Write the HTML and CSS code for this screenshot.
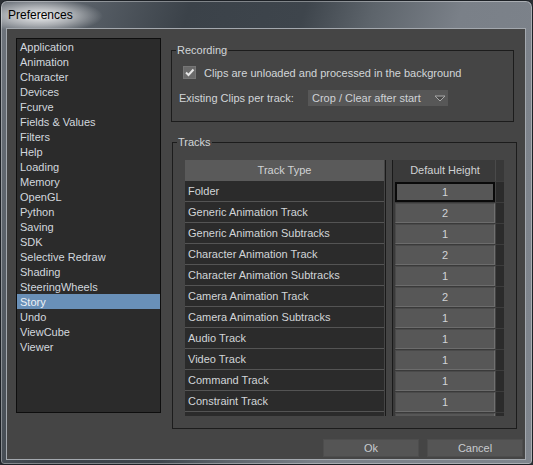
FILE: index.html
```html
<!DOCTYPE html>
<html>
<head>
<meta charset="utf-8">
<title>Preferences</title>
<link rel="stylesheet" href="styles.css">
</head>
<body>
<div class="window">
  <div class="titlebar"><span class="title">Preferences</span></div>
  <div class="client">
    <div class="main">
      <ul class="list">
        <li>Application</li>
        <li>Animation</li>
        <li>Character</li>
        <li>Devices</li>
        <li>Fcurve</li>
        <li>Fields &amp; Values</li>
        <li>Filters</li>
        <li>Help</li>
        <li>Loading</li>
        <li>Memory</li>
        <li>OpenGL</li>
        <li>Python</li>
        <li>Saving</li>
        <li>SDK</li>
        <li>Selective Redraw</li>
        <li>Shading</li>
        <li>SteeringWheels</li>
        <li class="selected">Story</li>
        <li>Undo</li>
        <li>ViewCube</li>
        <li>Viewer</li>
      </ul>
      <div class="right">
        <fieldset class="group rec">
          <legend>Recording</legend>
          <div class="check-row">
            <span class="checkbox"><svg width="13" height="13" viewBox="0 0 13 13"><path d="M3 6.5 L5.5 9 L10.5 3.5" fill="none" stroke="#e6e6e6" stroke-width="2"/></svg></span>
            <span>Clips are unloaded and processed in the background</span>
          </div>
          <div class="combo-row">
            <span class="combo-label">Existing Clips per track:</span>
            <span class="combo"><span>Crop / Clear after start</span><svg width="12" height="7" viewBox="0 0 12 7"><polygon points="1,1 11,1 6,6" fill="#474747" stroke="#a8a8a8" stroke-width="1"/></svg></span>
          </div>
        </fieldset>
        <fieldset class="group tracks">
          <legend>Tracks</legend>
          <div class="table">
            <div class="col-type">
              <div class="th">Track Type</div>
              <div class="td">Folder</div>
              <div class="td">Generic Animation Track</div>
              <div class="td">Generic Animation Subtracks</div>
              <div class="td">Character Animation Track</div>
              <div class="td">Character Animation Subtracks</div>
              <div class="td">Camera Animation Track</div>
              <div class="td">Camera Animation Subtracks</div>
              <div class="td">Audio Track</div>
              <div class="td">Video Track</div>
              <div class="td">Command Track</div>
              <div class="td">Constraint Track</div>
              <div class="td"></div>
            </div>
            <div class="splitter"></div>
            <div class="col-h">
              <div class="hrow"><div class="th2">Default Height</div><div class="narrow-h"></div></div>
              <div class="hrow"><div class="cell focus">1</div><div class="narrow"></div></div>
              <div class="hrow"><div class="cell">2</div><div class="narrow"></div></div>
              <div class="hrow"><div class="cell">1</div><div class="narrow"></div></div>
              <div class="hrow"><div class="cell">2</div><div class="narrow"></div></div>
              <div class="hrow"><div class="cell">1</div><div class="narrow"></div></div>
              <div class="hrow"><div class="cell">2</div><div class="narrow"></div></div>
              <div class="hrow"><div class="cell">1</div><div class="narrow"></div></div>
              <div class="hrow"><div class="cell">1</div><div class="narrow"></div></div>
              <div class="hrow"><div class="cell">1</div><div class="narrow"></div></div>
              <div class="hrow"><div class="cell">1</div><div class="narrow"></div></div>
              <div class="hrow"><div class="cell">1</div><div class="narrow"></div></div>
              <div class="hrow"><div class="cell"></div><div class="narrow"></div></div>
            </div>
          </div>
        </fieldset>
      </div>
    </div>
    <div class="buttons">
      <button class="btn">Ok</button>
      <button class="btn">Cancel</button>
    </div>
  </div>
</div>
</body>
</html>
```

FILE: styles.css
```css
* { box-sizing: border-box; }
html, body { margin: 0; padding: 0; background: #2a2e33; }
body { font-family: "Liberation Sans", Arial, sans-serif; font-size: 11px; color: #d2d5d8; }

.window {
  width: 533px;
  height: 465px;
  border: 1px solid #1d2126;
  border-radius: 7px 7px 4px 4px;
  box-shadow: inset 0 0 0 1px rgba(255,255,255,0.35);
  background:
    radial-gradient(ellipse 62px 17px at 40px 15px, rgba(255,255,255,0.9), rgba(255,255,255,0.45) 55%, rgba(255,255,255,0) 100%),
    linear-gradient(108deg, #70767e 0%, #5a6169 12%, #3b4249 28%, #3e454c 45%, #5d646b 55%, #7a8088 68%, #7f858d 100%);
  display: flex;
  flex-direction: column;
  overflow: hidden;
}

.titlebar {
  height: 27px;
  line-height: 25px;
  padding-top: 2px;
  padding-left: 7px;
  flex: none;
}
.title {
  font-size: 12px;
  color: #000;
}

.client {
  margin: 0 6px 4px 5px;
  flex: 1;
  border: 1px solid #a3a8ae;
  background: #454545;
  padding: 9px 2px 1px 9px;
  display: flex;
  flex-direction: column;
}

.main {
  display: flex;
  align-items: flex-start;
}

.list {
  list-style: none;
  margin: 0;
  padding: 0;
  width: 145px;
  height: 375px;
  border: 1px solid #0e0e0e;
  background: #2b2b2b;
  flex: none;
}
.list li {
  height: 15px;
  line-height: 16px;
  padding-left: 3px;
  white-space: nowrap;
  color: #d2d7de;
}
.list li.selected {
  background: #6990b8;
  color: #eef2f6;
}

.right {
  margin-left: 10px;
  margin-top: 6px;
  display: flex;
  flex-direction: column;
}

.group {
  margin: 0;
  padding: 0;
  border: 1px solid #1c1c1c;
  min-width: 0;
}
.group legend {
  margin-left: 4px;
  padding: 0 1px;
  line-height: 12px;
  font-size: 11px;
  color: #d2d5d8;
}

.rec {
  width: 343px;
  padding-bottom: 15px;
}
.check-row {
  margin-top: 10px;
  margin-left: 11px;
  height: 13px;
  display: flex;
  align-items: center;
  white-space: nowrap;
}
.checkbox {
  width: 13px;
  height: 13px;
  background: #6a6a6a;
  border: 1px solid #767676;
  display: flex;
  align-items: center;
  justify-content: center;
  margin-right: 8px;
  flex: none;
}
.checkbox svg { display: block; margin: -1px; }

.combo-row {
  margin-top: 11px;
  margin-left: 7px;
  height: 16px;
  display: flex;
  align-items: center;
}
.combo-label {
  width: 129px;
  flex: none;
  white-space: nowrap;
}
.combo {
  width: 140px;
  height: 16px;
  background: #575757;
  color: #cfd2d6;
  display: flex;
  align-items: center;
  justify-content: space-between;
  padding: 0 2px 0 4px;
  white-space: nowrap;
}
.combo svg { display: block; }

.tracks {
  width: 345px;
  margin-top: 14px;
  margin-left: 1px;
  padding-bottom: 12px;
}

.table {
  margin-top: 12px;
  margin-left: 12px;
  height: 256px;
  overflow: hidden;
  display: flex;
  align-items: flex-start;
}

.col-type {
  width: 199px;
  flex: none;
}
.th {
  height: 21px;
  line-height: 21px;
  background: #5a5a5a;
  text-align: center;
  color: #d0d2d4;
}
.td {
  height: 21px;
  line-height: 21px;
  padding-left: 3px;
  background: #2b2b2b;
  border-bottom: 1px solid #545454;
  white-space: nowrap;
}

.splitter {
  width: 8px;
  height: 256px;
  margin-left: 1px;
  flex: none;
  border-left: 1px solid #1a1a1a;
  border-right: 1px solid #1a1a1a;
  background: #444;
}

.col-h {
  width: 111px;
  flex: none;
  padding-left: 2px;
  background: #3a3a3a;
  height: 256px;
}
.hrow {
  display: flex;
  height: 21px;
}
.th2 {
  width: 100px;
  height: 21px;
  line-height: 21px;
  text-align: center;
  background: #3a3a3a;
  color: #d0d2d4;
}
.narrow-h {
  width: 9px;
  height: 21px;
  background: #383838;
  border-left: 1px solid #4a4a4a;
}
.cell {
  width: 100px;
  height: 20px;
  margin-top: 1px;
  background: #575757;
  border: 1px solid #4a4a4a;
  border-right-color: #707070;
  border-bottom-color: #6c6c6c;
  text-align: center;
  line-height: 18px;
  color: #d0d3d6;
}
.cell.focus {
  border: 2px solid #0a0a0a;
  line-height: 16px;
}
.narrow {
  width: 9px;
  height: 21px;
  background: #2b2b2b;
  border-top: 1px solid #3c3c3c;
  border-left: 1px solid #444;
}

.buttons {
  margin-top: auto;
  display: flex;
  justify-content: flex-end;
  gap: 8px;
  padding-bottom: 1px;
}
.btn {
  width: 96px;
  height: 18px;
  border: none;
  background: #555;
  box-shadow: inset 0 0 0 1px #4d4d4d;
  color: #c8cbcf;
  font-family: "Liberation Sans", Arial, sans-serif;
  font-size: 11px;
  padding: 0;
}
```
